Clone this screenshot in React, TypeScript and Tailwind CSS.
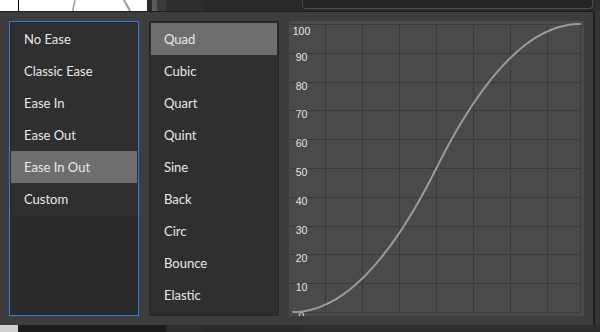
import React from "react";

const left = ["No Ease", "Classic Ease", "Ease In", "Ease Out", "Ease In Out", "Custom"];
const mid = ["Quad", "Cubic", "Quart", "Quint", "Sine", "Back", "Circ", "Bounce", "Elastic"];

function Graph() {
  const x0 = 4, x1 = 291, y0 = 291, y1 = 3;
  const pts: string[] = [];
  for (let i = 0; i <= 80; i++) {
    const t = i / 80;
    const e = t < 0.5 ? 2 * t * t : 1 - 2 * (1 - t) * (1 - t);
    pts.push(`${(x0 + (x1 - x0) * t).toFixed(2)},${(y0 - (y0 - y1) * e).toFixed(2)}`);
  }
  const hLines = Array.from({ length: 11 }, (_, k) => y1 + k * 28.8);
  const vLines = [36, 73, 110, 147, 184, 221, 258, 291];
  return (
    <svg width="295" height="295" viewBox="0 0 295 295" className="block">
      <rect x="0" y="0" width="295" height="295" fill="#4a4a4a" />
      {hLines.map((y, i) => (
        <line key={"h" + i} x1="1" x2="291" y1={Math.round(y) + 0.5} y2={Math.round(y) + 0.5} stroke="#3a3a3a" strokeWidth="1" />
      ))}
      {vLines.map((x, i) => (
        <line key={"v" + i} x1={x + 0.5} x2={x + 0.5} y1="3.5" y2="291" stroke="#3a3a3a" strokeWidth="1" />
      ))}
      {hLines.map((y, i) => {
        const v = 100 - i * 10;
        const by = i === 0 ? 13.5 : Math.round(y) + 7.5;
        return (
          <text key={"t" + i} x="12.5" y={by} textAnchor="middle" fontSize="10.5" fill="#e6e6e6" fontFamily="'Liberation Sans', Arial, sans-serif">
            {v}
          </text>
        );
      })}
      <polyline points={pts.join(" ")} fill="none" stroke="#9b9b9b" strokeWidth="2" strokeLinecap="round" />
    </svg>
  );
}

export default function App() {
  return (
    <div className="w-[600px] h-[332px] overflow-hidden flex flex-col bg-[#2a2a2a]" style={{ fontFamily: "Lato, 'Noto Sans', sans-serif" }}>
      {/* top background strip */}
      <div className="h-[11px] flex shrink-0">
        <div className="w-[147px] bg-white relative flex">
          <div className="w-[18px]" />
          <div className="w-px bg-black" />
          <svg width="128" height="11" className="block">
            <path d="M56 0 C55 4 54 8 54 11" stroke="#9a9a9a" strokeWidth="1.5" fill="none" />
            <path d="M105 0 C107 4 109 7 111 11" stroke="#9a9a9a" strokeWidth="2" fill="none" />
          </svg>
        </div>
        <div className="w-[5px] bg-[#2b2b2b]" />
        <div className="w-[5px] bg-[#5a5a5a]" />
        <div className="w-[9px] bg-[#3a3a3a]" />
        <div className="w-[38px] bg-[#2e2e2e]" />
        <div className="w-[98px] bg-[#2a2a2a]" />
        <div className="w-[291px] h-[9px] bg-[#242424] border border-t-0 border-[#4a4a4a] rounded-b-[4px]" />
        <div className="flex-1 bg-[#2e2e2e]" />
      </div>
      {/* middle row */}
      <div className="h-[314px] flex shrink-0">
        <div className="w-[593px] h-full bg-[#3d3d3d] border-t border-[#1c1c1c] flex gap-[10px] pl-[9px] pt-[9px]">
          <div className="w-[130px] h-[295px] border border-[#2f7be0] bg-[#2b2b2b] p-px flex flex-col">
            {left.map((t) => (
              <div
                key={t}
                className={`h-[32px] flex items-center pl-[13px] pt-[2px] text-[13px] text-[#e8e8e8] ${t === "Ease In Out" ? "bg-[#6e6e6e]" : "bg-[#2f2f2f]"}`}
              >
                {t}
              </div>
            ))}
          </div>
          <div className="w-[130px] h-[295px] border border-[#262626] rounded-[2px] bg-[#2c2c2c] p-px flex flex-col">
            {mid.map((t) => (
              <div
                key={t}
                className={`h-[32px] flex items-center pl-[13px] pt-[2px] text-[13px] text-[#e8e8e8] ${t === "Quad" ? "bg-[#6e6e6e]" : "bg-[#2f2f2f]"}`}
              >
                {t}
              </div>
            ))}
          </div>
          <div className="w-[295px] h-[295px] overflow-hidden">
            <Graph />
          </div>
        </div>
        <div className="w-[2px] bg-[#1e1e1e]" />
        <div className="flex-1 bg-[#353535]" />
      </div>
      {/* bottom strip */}
      <div className="flex-1 flex">
        <div className="w-[18px] bg-[#cfcfcf]" />
        <div className="w-[148px] bg-[#1c1c1c]" />
        <div className="w-[38px] bg-[#2d2d2d]" />
        <div className="w-[96px] bg-[#2a2a2a]" />
        <div className="flex-1 bg-[#2d2d2d]" />
      </div>
    </div>
  );
}
